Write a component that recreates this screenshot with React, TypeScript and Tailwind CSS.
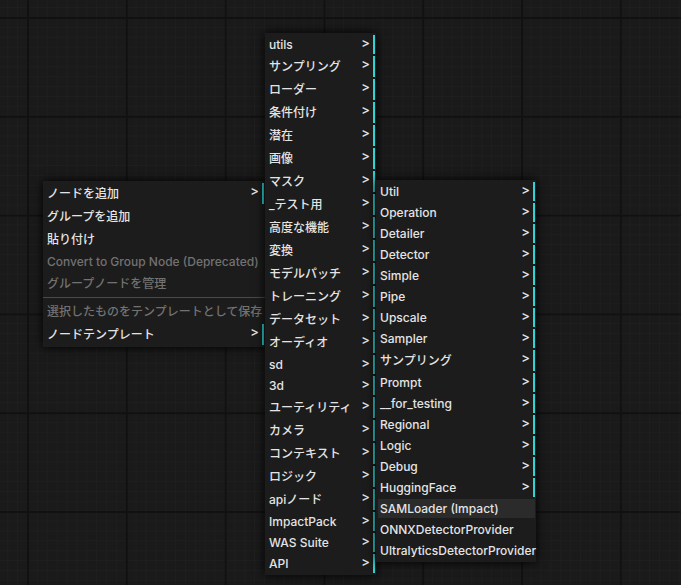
import React from 'react';

type Item = {
  label: string;
  sub?: boolean;
  disabled?: boolean;
  active?: boolean;
  separator?: boolean;
};

const isWide = (s: string) => /[^\x00-\x7F]/.test(s);

const MenuEntry: React.FC<{ item: Item }> = ({ item }) => {
  if (item.separator) {
    return (
      <div className="h-[3px] flex items-center">
        <div className="h-px w-full bg-[#4a4a4a]" />
      </div>
    );
  }
  const wide = isWide(item.label);
  return (
    <div
      className={`relative ml-[2px] mr-[1px] pl-[2px] pr-[14px] flex items-center whitespace-nowrap ${
        wide ? 'h-[21px] leading-[21px]' : 'h-[19px] leading-[19px]'
      } ${item.sub ? 'border-r-2 border-[#2fd4d4]' : ''} ${
        item.disabled ? 'text-[#727272]' : 'text-[#e4e4e4]'
      } ${item.active ? 'bg-[#2b2b2b]' : ''}`}
    >
      {item.label}
      {item.sub && (
        <span className="absolute right-[3px] top-[1px] leading-[14px] text-[13px] text-[#e4e4e4]">&gt;</span>
      )}
    </div>
  );
};

const Menu: React.FC<{ items: Item[]; className: string }> = ({ items, className }) => {
  return (
    <div
      className={`absolute flex flex-col gap-[2px] py-[2px] bg-[#1c1c1c] shadow-[0_0_10px_black] ${className}`}
    >
      {items.map((it, i) => (
        <MenuEntry key={i} item={it} />
      ))}
    </div>
  );
};

const mainMenu: Item[] = [
  { label: 'ノードを追加', sub: true },
  { label: 'グループを追加' },
  { label: '貼り付け' },
  { label: 'Convert to Group Node (Deprecated)', disabled: true },
  { label: 'グループノードを管理', disabled: true },
  { label: '', separator: true },
  { label: '選択したものをテンプレートとして保存', disabled: true },
  { label: 'ノードテンプレート', sub: true },
];

const categories: Item[] = [
  'utils', 'サンプリング', 'ローダー', '条件付け', '潜在', '画像', 'マスク', '_テスト用',
  '高度な機能', '変換', 'モデルパッチ', 'トレーニング', 'データセット', 'オーディオ', 'sd', '3d',
  'ユーティリティ', 'カメラ', 'コンテキスト', 'ロジック', 'apiノード', 'ImpactPack', 'WAS Suite', 'API',
].map((label) => ({ label, sub: true }));

const impactPack: Item[] = [
  ...[
    'Util', 'Operation', 'Detailer', 'Detector', 'Simple', 'Pipe', 'Upscale', 'Sampler',
    'サンプリング', 'Prompt', '__for_testing', 'Regional', 'Logic', 'Debug', 'HuggingFace',
  ].map((label) => ({ label, sub: true })),
  { label: 'SAMLoader (Impact)', active: true },
  { label: 'ONNXDetectorProvider' },
  { label: 'UltralyticsDetectorProvider' },
];

export default function App() {
  return (
    <div
      className="relative w-[681px] h-[585px] overflow-hidden bg-[#1a1a1a] text-[12px] font-medium font-['Inter','Noto_Sans_CJK_JP',sans-serif] bg-[linear-gradient(to_right,#111111_2px,transparent_2px),linear-gradient(to_bottom,#111111_2px,transparent_2px),linear-gradient(to_right,#1e1e1e_1px,transparent_1px),linear-gradient(to_bottom,#1e1e1e_1px,transparent_1px)] bg-[size:98.8px_98.8px,98.8px_98.8px,9.88px_9.88px,9.88px_9.88px] bg-[position:27px_17px,27px_17px,27px_17px,27px_17px]"
    >
      <Menu items={mainMenu} className="left-[43px] top-[181px] w-[222px]" />
      <Menu items={categories} className="left-[265px] top-[33px] w-[111px]" />
      <Menu items={impactPack} className="left-[376px] top-[180px] w-[160px]" />
    </div>
  );
}
